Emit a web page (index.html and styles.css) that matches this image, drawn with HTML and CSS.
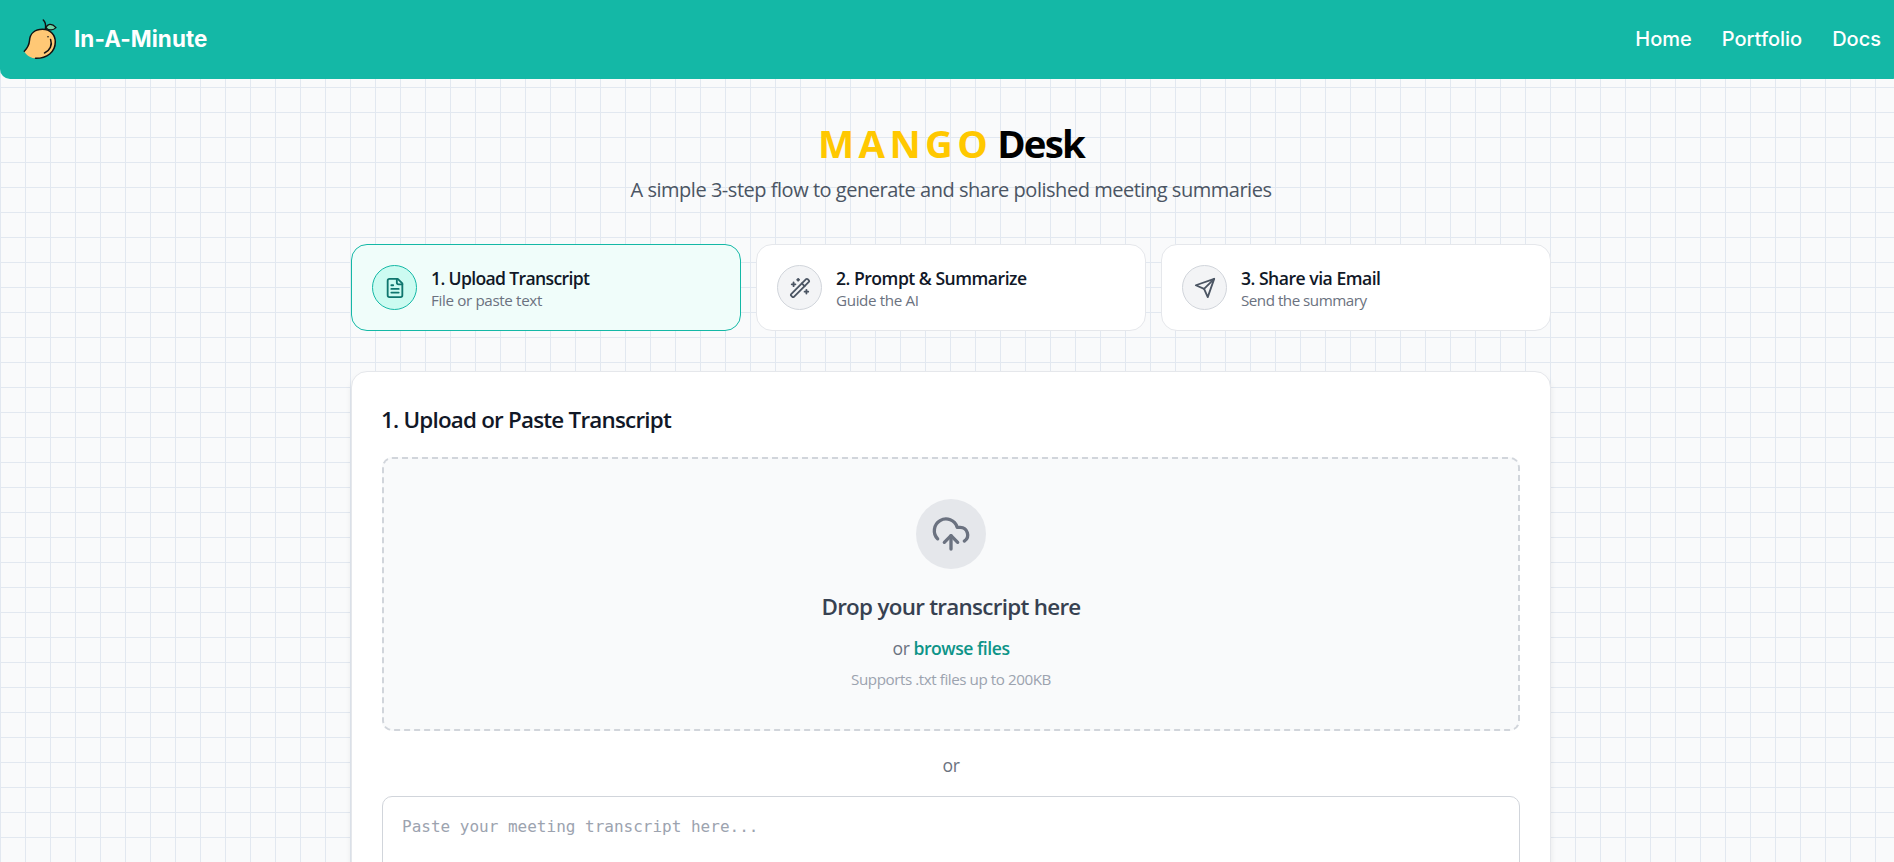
FILE: index.html
```html
<!DOCTYPE html>
<html lang="en">
<head>
<meta charset="utf-8">
<title>Mango Desk</title>
<link rel="stylesheet" href="styles.css">
</head>
<body>
<div class="page">
  <header class="header">
    <a class="brand">
      <svg class="logo" viewBox="0 0 36 42" fill="none" stroke-linecap="round" stroke-linejoin="round">
        <path d="M1.300 33.500C5.500 29 6.200 26.500 6.500 22.500C7 15.500 12 11.300 19.500 11.300C27.500 11.300 32.300 17 32.300 24C32.300 34 24 40.500 13.500 40.500C8 40.500 3.500 37.500 1.300 33.500Z" fill="#ffc875"/>
        <path d="M1.300 33.200C5.500 29 6.200 26.500 6.500 22.500C7 15.500 12 11.300 19.500 11.300C27.500 11.300 32.300 17 32.300 24C32.300 34 24 40.500 12.500 40.300" stroke="#111" stroke-width="1.500"/>
        <path d="M22.500 10.800C23 7 22.500 4 20.300 2" stroke="#111" stroke-width="1.500"/>
        <path d="M23 10C24 6 28.500 4.500 33 9.600C30 12.500 26 12.500 23 10Z" fill="#6fd3a6" stroke="#111" stroke-width="1.300"/>
        <path d="M27.600 21.500C29.600 27 27 32.500 21.500 35" stroke="#111" stroke-width="1.500"/>
        <circle cx="25" cy="18.800" r=".8" fill="#111"/>
      </svg>
      <span class="brand-name">In-A-Minute</span>
    </a>
    <nav class="nav"><a>Home</a><a>Portfolio</a><a>Docs</a></nav>
  </header>
  <main class="main">
    <h1 class="title"><span class="title-accent">MANGO</span> <span class="title-rest">Desk</span></h1>
    <p class="subtitle">A simple 3-step flow to generate and share polished meeting summaries</p>
    <div class="steps">
      <div class="step step-active">
        <div class="step-icon">
          <svg width="22" height="22" viewBox="0 0 24 24" fill="none" stroke="currentColor" stroke-width="2" stroke-linecap="round" stroke-linejoin="round"><path d="M15 2H6a2 2 0 0 0-2 2v16a2 2 0 0 0 2 2h12a2 2 0 0 0 2-2V7Z"/><path d="M14 2v4a2 2 0 0 0 2 2h4"/><path d="M10 9H8"/><path d="M16 13H8"/><path d="M16 17H8"/></svg>
        </div>
        <div class="step-text"><span class="step-title">1. Upload Transcript</span><span class="step-sub">File or paste text</span></div>
      </div>
      <div class="step step-prompt">
        <div class="step-icon">
          <svg width="22" height="22" viewBox="0 0 24 24" fill="none" stroke="currentColor" stroke-width="2" stroke-linecap="round" stroke-linejoin="round"><path d="m21.640 3.640-1.280-1.280a1.210 1.210 0 0 0-1.720 0L2.360 18.640a1.210 1.210 0 0 0 0 1.720l1.280 1.280a1.200 1.200 0 0 0 1.720 0L21.640 5.360a1.200 1.200 0 0 0 0-1.720"/><path d="m14 7 3 3"/><path d="M5 6v4"/><path d="M19 14v4"/><path d="M10 2v2"/><path d="M7 8H3"/><path d="M21 16h-4"/><path d="M11 3H9"/></svg>
        </div>
        <div class="step-text"><span class="step-title">2. Prompt &amp; Summarize</span><span class="step-sub">Guide the AI</span></div>
      </div>
      <div class="step step-share">
        <div class="step-icon">
          <svg width="22" height="22" viewBox="0 0 24 24" fill="none" stroke="currentColor" stroke-width="2" stroke-linecap="round" stroke-linejoin="round"><path d="m22 2-7 20-4-9-9-4Z"/><path d="M22 2 11 13"/></svg>
        </div>
        <div class="step-text"><span class="step-title">3. Share via Email</span><span class="step-sub">Send the summary</span></div>
      </div>
    </div>
    <section class="panel">
      <h2 class="panel-title">1. Upload or Paste Transcript</h2>
      <div class="dropzone">
        <div class="drop-icon">
          <svg width="40" height="40" viewBox="0 0 24 24" fill="none" stroke="currentColor" stroke-width="2" stroke-linecap="round" stroke-linejoin="round"><path d="M12 13v8"/><path d="M4 14.899A7 7 0 1 1 15.710 8h1.790a4.500 4.500 0 0 1 2.500 8.242"/><path d="m8 17 4-4 4 4"/></svg>
        </div>
        <p class="drop-title">Drop your transcript here</p>
        <p class="drop-browse">or <span class="browse">browse files</span></p>
        <p class="drop-note">Supports .txt files up to 200KB</p>
      </div>
      <p class="divider">or</p>
      <textarea class="transcript" placeholder="Paste your meeting transcript here..."></textarea>
    </section>
  </main>
</div>
</body>
</html>
```
FILE: styles.css
```css
* {
  box-sizing: border-box;
}
html {
  overflow: hidden;
}
body {
  margin: 0;
  height: 862px;
  overflow: hidden;
  font-family: "Open Sans", "Noto Sans", sans-serif;
  color: #111827;
}
h1, h2, p {
  margin: 0;
}
.page {
  width: 1902px;
  height: 862px;
  overflow: hidden;
  background-color: #f9fafb;
  background-image:
    linear-gradient(to right, #e2e8f0 1px, transparent 1px),
    linear-gradient(to bottom, #e2e8f0 1px, transparent 1px);
  background-size: 25px 25px;
  background-position: 0 12px;
}

/* Header */
.header {
  display: flex;
  align-items: center;
  justify-content: space-between;
  height: 79px;
  padding: 0 21px 2px 23px;
  background: #14b8a6;
  border-radius: 0 0 10px 10px;
  color: #fff;
  font-family: Inter, sans-serif;
}
.brand {
  display: flex;
  align-items: center;
  gap: 15px;
}
.logo {
  width: 36px;
  height: 42px;
}
.brand-name {
  font-size: 22.4px;
  font-weight: 700;
  letter-spacing: 0.08px;
}
.nav {
  display: flex;
  gap: 30px;
  font-size: 20px;
  font-weight: 500;
}

/* Intro */
.main {
  width: 1200px;
  margin: 0 auto;
  padding-top: 37px;
}
.title {
  display: flex;
  justify-content: center;
  font-size: 38.4px;
  font-weight: 700;
  line-height: 54px;
  color: #000;
}
.title-accent {
  color: #ffc800;
  letter-spacing: 4.4px;
  margin-right: 5px;
}
.title-rest {
  letter-spacing: -1.8px;
}
.subtitle {
  text-align: center;
  font-size: 20px;
  line-height: 30px;
  margin-top: 5px;
  letter-spacing: -0.474px;
  color: #4b5563;
}

/* Steps */
.steps {
  display: grid;
  grid-template-columns: repeat(3, 1fr);
  gap: 15px;
  margin-top: 39px;
}
.step {
  display: flex;
  align-items: center;
  gap: 14px;
  height: 87px;
  padding: 0 20px;
  background: #fff;
  border: 1px solid #e5e7eb;
  border-radius: 16px;
}
.step-active {
  background: #f0fdfa;
  border-color: #14b8a6;
}
.step-icon {
  display: flex;
  align-items: center;
  justify-content: center;
  width: 45px;
  height: 45px;
  border: 1px solid #d1d5db;
  border-radius: 50%;
  background: #f3f4f6;
  color: #4b5563;
}
.step-active .step-icon {
  border-color: #14b8a6;
  background: #ccfbf1;
  color: #0f766e;
}
.step-text {
  display: flex;
  flex-direction: column;
  align-items: flex-start;
}
.step-title {
  font-size: 17.6px;
  font-weight: 600;
  line-height: 24px;
  letter-spacing: -0.66px;
}
.step-prompt .step-title,
.step-share .step-title {
  letter-spacing: -0.5px;
}
.step-sub {
  font-size: 15.2px;
  line-height: 20px;
  letter-spacing: -0.36px;
  color: #6b7280;
}
.step-share .step-sub {
  letter-spacing: -0.5px;
}

/* Upload panel */
.panel {
  height: 600px;
  margin-top: 40px;
  padding: 30px;
  border: 1px solid #e5e7eb;
  border-radius: 16px;
  background: #fff;
  box-shadow: 0 4px 6px rgba(0, 0, 0, 0.08);
}
.panel-title {
  font-size: 22.4px;
  font-weight: 600;
  line-height: 34px;
  padding-top: 1px;
  margin-left: -1px;
  letter-spacing: -0.78px;
}
.dropzone {
  display: flex;
  flex-direction: column;
  align-items: center;
  height: 274px;
  margin-top: 20px;
  padding-top: 40px;
  border: 2px dashed #d1d5db;
  border-radius: 10px;
  background: #f9fafb;
}
.drop-icon {
  display: flex;
  align-items: center;
  justify-content: center;
  width: 70px;
  height: 70px;
  border-radius: 50%;
  background: #e5e7eb;
  color: #6b7280;
}
.drop-title {
  font-size: 22.4px;
  font-weight: 600;
  line-height: 32px;
  margin-top: 22px;
  letter-spacing: -0.71px;
  color: #374151;
}
.drop-browse {
  font-size: 17.6px;
  line-height: 26px;
  margin-top: 12px;
  letter-spacing: -0.48px;
  color: #6b7280;
}
.browse {
  font-weight: 600;
  color: #0d9488;
}
.drop-note {
  font-size: 15.2px;
  line-height: 22px;
  margin-top: 7px;
  letter-spacing: -0.44px;
  color: #9ca3af;
}
.divider {
  text-align: center;
  font-size: 17.6px;
  line-height: 26px;
  margin-top: 21px;
  letter-spacing: -0.4px;
  color: #6b7280;
}
.transcript {
  display: block;
  width: 100%;
  height: 220px;
  margin-top: 18px;
  padding: 17px 19px;
  border: 1px solid #d1d5db;
  border-radius: 10px;
  background: #fff;
  resize: none;
  font: 16px/26px "DejaVu Sans Mono", monospace;
}
.transcript::placeholder {
  color: #9ca3af;
  opacity: 1;
}
```
